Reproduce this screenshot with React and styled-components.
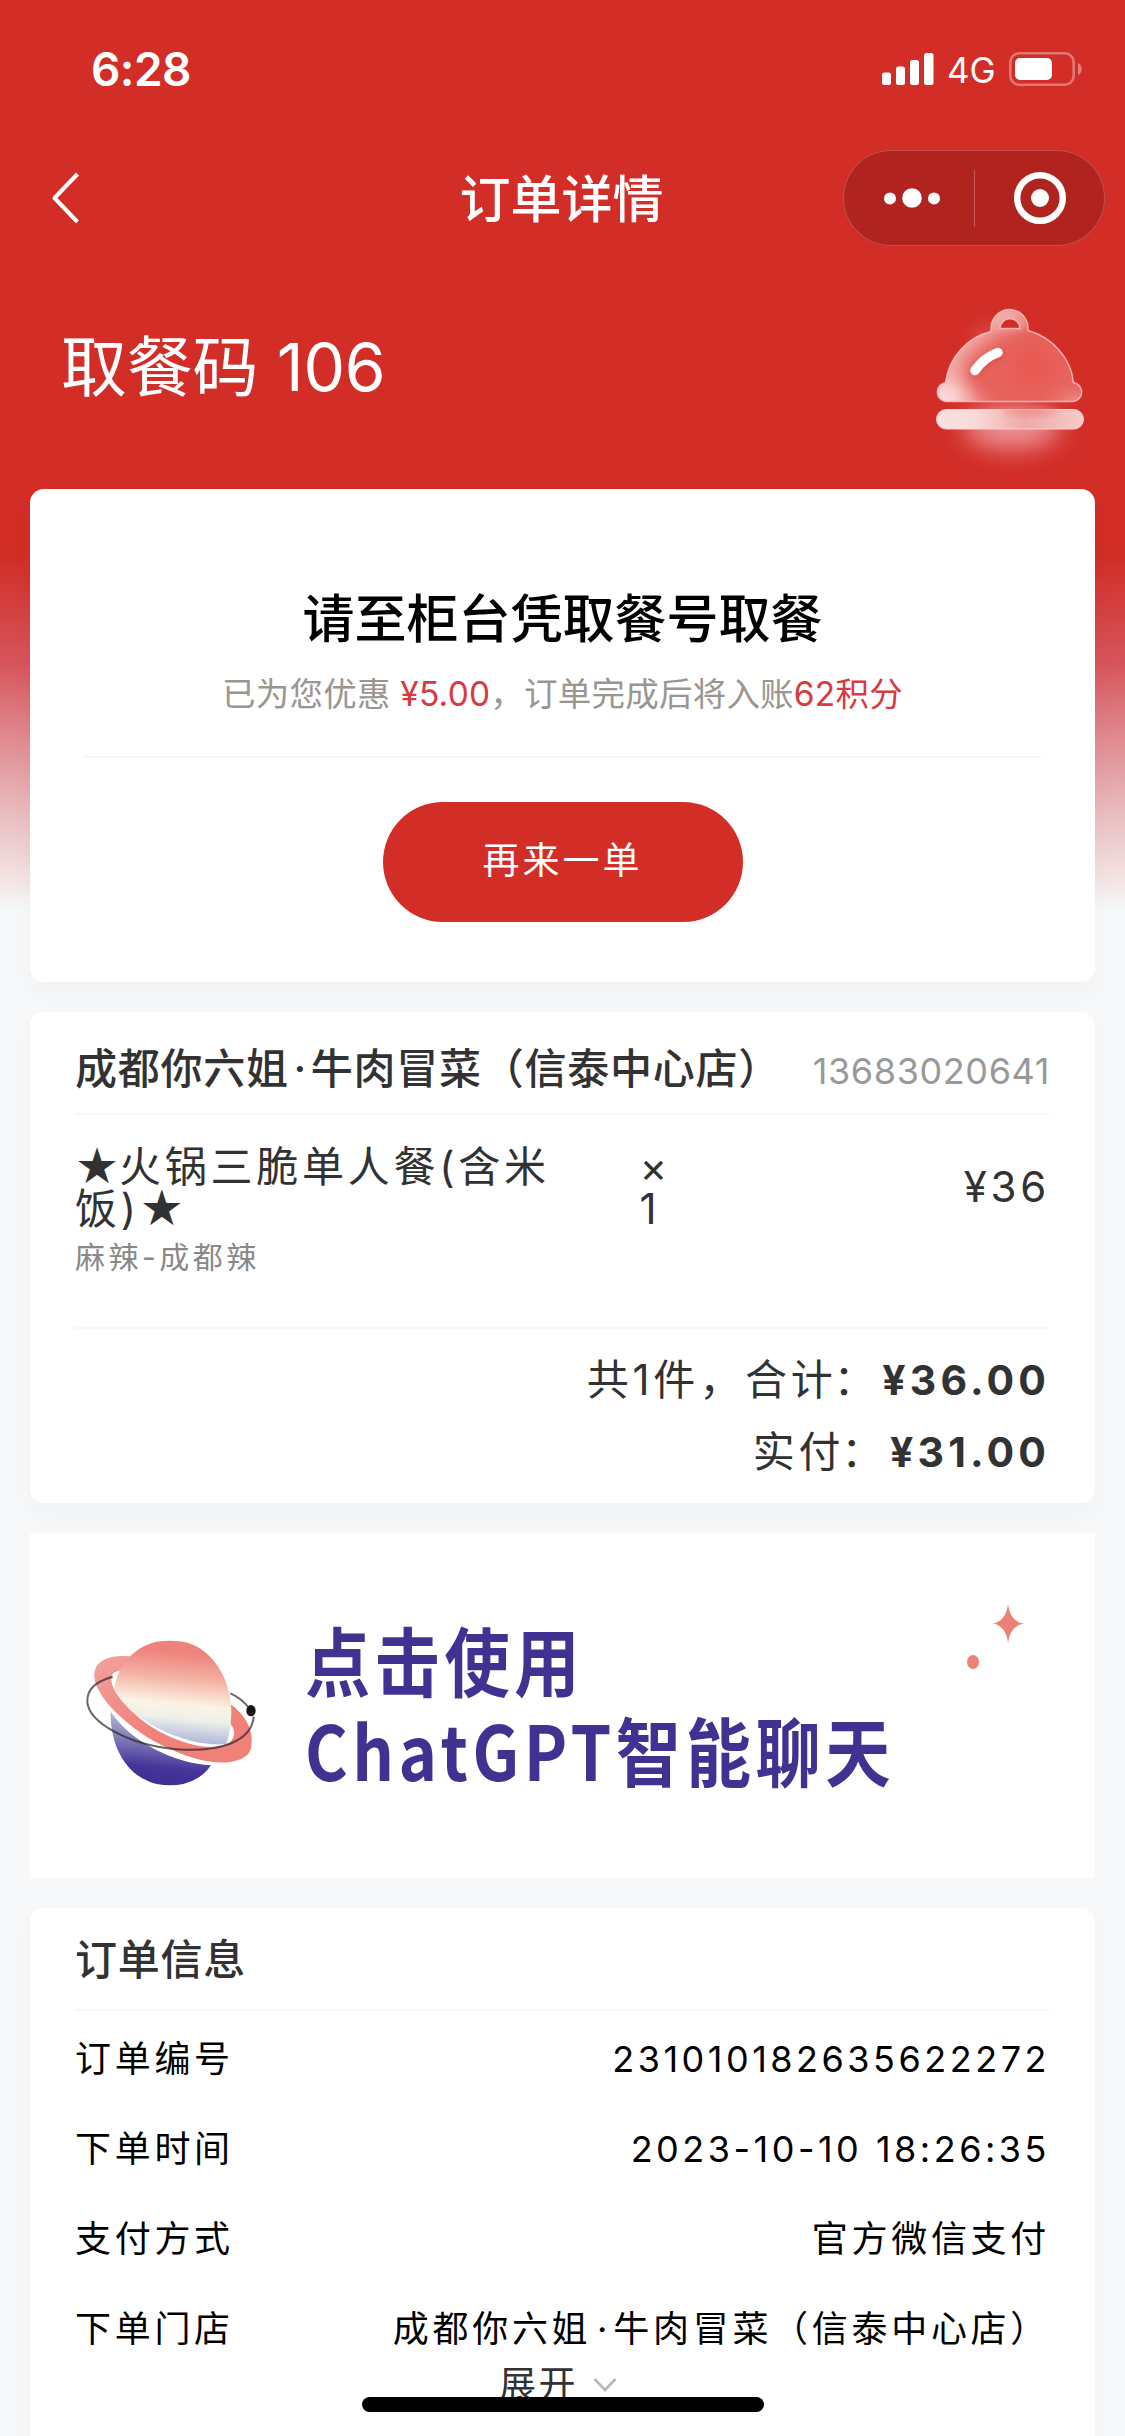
import React from "react";
import styled, { createGlobalStyle } from "styled-components";

const GlobalStyle = createGlobalStyle`
  *, *::before, *::after { box-sizing: border-box; }
  html, body { margin: 0; padding: 0; background: #f7f8fa; }
  body {
    font-family: Inter, "Noto Sans CJK SC", sans-serif;
    color: #323233;
    -webkit-font-smoothing: antialiased;
  }
`;

const Page = styled.div`
  position: relative;
  width: 1125px;
  height: 2436px;
  overflow: hidden;
  display: flex;
  flex-direction: column;
  background: linear-gradient(
    180deg,
    #d22d27 0,
    #d22d27 556px,
    #d6555b 663px,
    #df888e 735px,
    #eabdc0 815px,
    #f3e4e4 880px,
    #f7f8fa 910px
  );
`;

const StatusBar = styled.header`
  flex: none;
  display: flex;
  align-items: center;
  justify-content: space-between;
  height: 138px;
  padding: 0 43px 0 91px;
  color: #fff;
`;

const Clock = styled.span`
  font-size: 46px;
  line-height: 56px;
  font-weight: 600;
  letter-spacing: -0.6px;
`;

const StatusIcons = styled.div`
  display: flex;
  align-items: center;
`;

const Network = styled.span`
  width: 49px;
  margin: 2px 13px 0 13px;
  font-size: 35px;
  line-height: 40px;
`;

const NavBar = styled.nav`
  flex: none;
  display: grid;
  grid-template-columns: 1fr auto 1fr;
  align-items: center;
  height: 120px;
  padding: 0 20px;
  color: #fff;

  > svg { margin-left: 30px; }
`;

const NavTitle = styled.h1`
  margin: 3px 2px 0 0;
  font-size: 51px;
  line-height: 60px;
  font-weight: 500;
`;

const Capsule = styled.div`
  justify-self: end;
  display: flex;
  align-items: center;
  width: 262px;
  height: 96px;
  border: 1px solid rgba(255, 255, 255, 0.2);
  border-radius: 48px;
  background: #b1231f;
`;

const CapsuleButton = styled.button`
  flex: none;
  display: flex;
  align-items: center;
  justify-content: center;
  width: ${(p) => p.$width}px;
  height: 100%;
  padding: 0 0 0 ${(p) => p.$inset || 0}px;
  border: 0;
  background: none;
`;

const CapsuleDivider = styled.span`
  width: 1px;
  height: 57px;
  background: rgba(255, 255, 255, 0.25);
`;

const PickupBanner = styled.section`
  flex: none;
  display: flex;
  justify-content: space-between;
  height: 231px;
  padding: 37px 25px 0 61px;
  color: #fff;
`;

const PickupCode = styled.h2`
  margin: 24px 0 0;
  font-size: 66px;
  line-height: 96px;
  font-weight: 400;
  letter-spacing: -0.2px;
`;

const Card = styled.section`
  flex: none;
  height: ${(p) => p.$height}px;
  margin: 0 30px 30px;
  padding: ${(p) => p.$padding || "0 45px 0 45px"};
  border-radius: 14px;
  background: #fff;
  box-shadow: 0 12px 24px rgba(50, 50, 30, 0.03);
`;

const Rule = styled.div`
  height: 2px;
  background: #f6f7f8;
`;

const PickupHint = styled.h3`
  margin: 0;
  padding-top: 95px;
  font-size: 52px;
  line-height: 72px;
  font-weight: 500;
  text-align: center;
  color: #000;
`;

const Savings = styled.p`
  margin: 18px -10px 42px;
  font-size: 33.5px;
  line-height: 40px;
  letter-spacing: 0.22px;
  text-align: center;
  white-space: nowrap;
  color: #999691;
`;

const Highlight = styled.span`
  color: #d93a3f;
`;

const ReorderButton = styled.button`
  display: block;
  width: 360px;
  height: 120px;
  margin: 44px auto 0;
  padding: 0 0 2px 0;
  border: 0;
  border-radius: 60px;
  background: #d22d27;
  color: #fff;
  font: 400 37px/60px Inter, "Noto Sans CJK SC", sans-serif;
  letter-spacing: 3px;
`;

const CardHeader = styled.div`
  display: flex;
  align-items: center;
  justify-content: space-between;
  height: 101px;
  padding-top: ${(p) => p.$drop || 0}px;
`;

const CardTitle = styled.h3`
  margin: 0;
  font-size: 42px;
  line-height: 60px;
  font-weight: 500;
  letter-spacing: 0.75px;
  white-space: nowrap;
`;

const MidDot = styled.span`
  display: inline-block;
  width: 22px;
  letter-spacing: 0;
  text-align: center;
`;

const Phone = styled.span`
  margin-top: 4px;
  font-size: 36px;
  line-height: 44px;
  letter-spacing: 0.6px;
  color: #999;
`;

const Item = styled.div`
  display: grid;
  grid-template-columns: 564.5px 40px 1fr;
  height: 212px;
  padding-top: 31px;
  font-size: 42px;
  line-height: 42px;
  letter-spacing: 3.75px;
`;

const ItemName = styled.div`
  width: 490px;
`;

const Star = styled.span`
  display: inline-block;
  width: 44px;
  height: 42px;
  vertical-align: top;
  font-size: 35px;
  letter-spacing: 0;
  text-align: center;
  -webkit-text-stroke: 2.4px #323233;
`;

const ItemOption = styled.div`
  margin-top: 9px;
  font-size: 30px;
  line-height: 36px;
  letter-spacing: 3.5px;
  color: #888;
`;

const Quantity = styled.div`
  display: flex;
  flex-direction: column;
`;

const Price = styled.div`
  padding-top: 20px;
  text-align: right;
`;

const Total = styled.div`
  height: 72px;
  font-size: 42px;
  line-height: 72px;
  letter-spacing: 3.8px;
  text-align: right;
  white-space: nowrap;

  b { font-weight: 700; font-size: 41px; letter-spacing: 4.1px; }
`;

const Colon = styled.span`
  position: relative;
  left: -3px;
`;

const Totals = styled.div`
  padding-top: 15px;
`;

const Promo = styled.section`
  flex: none;
  position: relative;
  display: flex;
  align-items: flex-start;
  height: 345px;
  margin: 0 30px 30px;
  padding: 77px 0 0 30px;
  background: #fff;
`;

const PromoText = styled.div`
  margin: 4px 0 0 25px;
  font: 700 75px/90px "Noto Sans CJK SC", sans-serif;
  letter-spacing: 5.2px;
  white-space: nowrap;
  color: #433192;
  transform: scaleX(0.87);
  transform-origin: left top;
`;

const Sparkle = styled.svg`
  position: absolute;
  top: 65px;
  right: 68px;
`;

const InfoRow = styled.div`
  display: flex;
  align-items: center;
  justify-content: space-between;
  height: 90px;
  padding-top: 5px;
  font-size: 36px;
  line-height: 50px;
  letter-spacing: 3.7px;
  white-space: nowrap;
  color: #000;
`;

const Numeric = styled.span`
  letter-spacing: 3.5px;
`;

const ExpandButton = styled.button`
  display: flex;
  align-items: center;
  justify-content: center;
  gap: 15px;
  width: 100%;
  height: 50px;
  margin-top: -11px;
  padding: 0 9px 0 0;
  border: 0;
  background: none;
  color: #323233;
  font: 400 37px/50px Inter, "Noto Sans CJK SC", sans-serif;
  letter-spacing: 2.6px;
`;

const HomeIndicator = styled.div`
  position: absolute;
  left: 362px;
  bottom: 24px;
  width: 402px;
  height: 15px;
  border-radius: 8px;
  background: #000;
`;

const SignalIcon = () => (
  <svg width="52" height="34" viewBox="0 0 52 34" fill="#fff">
    <rect x="0" y="20.5" width="9" height="12.5" rx="2.5" />
    <rect x="14" y="14.5" width="9" height="18.5" rx="2.5" />
    <rect x="28" y="8" width="9" height="25" rx="2.5" />
    <rect x="42" y="1" width="9.5" height="32" rx="2.5" />
  </svg>
);

const BatteryIcon = () => (
  <svg width="73" height="34" viewBox="0 0 73 34">
    <rect x="1.3" y="1.3" width="63.4" height="31.4" rx="9" fill="none" stroke="#fff" strokeOpacity="0.36" strokeWidth="2.6" />
    <rect x="6" y="6" width="37" height="22" rx="5" fill="#fff" />
    <path d="M69 11c5 2 5 10 0 12z" fill="#fff" fillOpacity="0.4" />
  </svg>
);

const BackIcon = () => (
  <svg width="30" height="54" viewBox="0 0 30 54" fill="none" stroke="#fff" strokeWidth="4" strokeLinejoin="round">
    <path d="M27.500 3 4.500 27l23 24" />
  </svg>
);

const MoreIcon = () => (
  <svg width="58" height="20" viewBox="0 0 58 20" fill="#fff">
    <circle cx="7" cy="10.5" r="6" />
    <circle cx="29" cy="10" r="9.8" />
    <circle cx="51" cy="10.5" r="6" />
  </svg>
);

const TargetIcon = () => (
  <svg width="52" height="52" viewBox="0 0 52 52">
    <circle cx="26" cy="26" r="22.8" fill="none" stroke="#fff" strokeWidth="6.4" />
    <circle cx="26" cy="26" r="9" fill="#fff" />
  </svg>
);

const DOME =
  "M945.500 382.500C949 357 967 337.500 991 331.500V328a18.500 18.500 0 0 1 37 0v2.500C1052 337 1071 358 1073.500 382.500a9.600 9.600 0 0 1 0 19H945.500a9.600 9.600 0 0 1 0-19zM1000 328.500h20c-1-13-19-13-20 0z";

const BellIcon = () => (
  <svg width="180" height="190" viewBox="920 295 180 190">
    <defs>
      <clipPath id="domeClip"><path d={DOME} clipRule="evenodd" /></clipPath>
      <linearGradient id="plate" x1="936" y1="424" x2="1084" y2="414" gradientUnits="userSpaceOnUse">
        <stop offset="0" stopColor="#fae0e0" />
        <stop offset="0.27" stopColor="#f9dada" />
        <stop offset="0.6" stopColor="#f0a9a7" />
        <stop offset="1" stopColor="#f6cccb" />
      </linearGradient>
      <filter id="blurWide" x="-80%" y="-100%" width="260%" height="300%">
        <feGaussianBlur stdDeviation="13" />
      </filter>
      <filter id="blurSoft" x="-80%" y="-80%" width="260%" height="260%">
        <feGaussianBlur stdDeviation="9" />
      </filter>
      <filter id="blurFine" x="-50%" y="-80%" width="200%" height="260%">
        <feGaussianBlur stdDeviation="3" />
      </filter>
    </defs>
    <ellipse cx="1012" cy="427" rx="48" ry="22" fill="#f3a5aa" opacity="0.85" filter="url(#blurWide)" />
    <circle cx="985" cy="337" r="10" fill="#f0a5a2" opacity="0.4" filter="url(#blurSoft)" />
    <g clipPath="url(#domeClip)">
      <rect x="930" y="300" width="160" height="106" fill="#e8635e" />
      <circle cx="1033" cy="366" r="20" fill="#e8574d" opacity="0.8" filter="url(#blurSoft)" />
      <path d="M920 420V350L980 310 1020 290V322L990 336 962 362 964 384 990 412z" fill="#f6c6c5" opacity="0.75" filter="url(#blurSoft)" />
      <ellipse cx="942" cy="398" rx="22" ry="14" fill="#fdeaea" opacity="0.85" filter="url(#blurSoft)" />
      <ellipse cx="1080" cy="404" rx="26" ry="9" fill="#f4b5b3" opacity="0.6" filter="url(#blurSoft)" />
      <path d="M991 330v-4a18.500 18.500 0 0 1 37 0v4z" fill="#f3aeac" opacity="0.5" filter="url(#blurFine)" />
    </g>
    <path d={DOME} fill="none" stroke="#f7c0bf" strokeOpacity="0.85" strokeWidth="1.5" />
    <path d="M976 373q8-12 24-19" fill="none" stroke="#c83a36" strokeOpacity="0.4" strokeWidth="10" strokeLinecap="round" filter="url(#blurFine)" />
    <path d="M975 370.500q9-13 23-18" fill="none" stroke="#fff" strokeWidth="9.5" strokeLinecap="round" />
    <rect x="936.500" y="409.500" width="147" height="19.500" rx="9.700" fill="url(#plate)" stroke="#f8d0d0" strokeWidth="1" />
    <ellipse cx="1030" cy="412" rx="28" ry="3" fill="#e8716c" opacity="0.55" filter="url(#blurFine)" />
  </svg>
);

const PlanetIcon = () => (
  <svg width="220" height="200" viewBox="0 0 660 600">
    <defs>
      <linearGradient id="planetTop" x1="350" y1="95" x2="320" y2="405" gradientUnits="userSpaceOnUse">
        <stop offset="0.1" stopColor="#ee837c" />
        <stop offset="0.35" stopColor="#f3b3a5" />
        <stop offset="0.6" stopColor="#fbf3e4" />
        <stop offset="0.73" stopColor="#eef1ea" />
        <stop offset="1" stopColor="#a3acd5" />
      </linearGradient>
      <linearGradient id="planetBase" x1="300" y1="310" x2="280" y2="525" gradientUnits="userSpaceOnUse">
        <stop offset="0" stopColor="#b4bcde" />
        <stop offset="0.35" stopColor="#8883bd" />
        <stop offset="0.75" stopColor="#45359a" />
        <stop offset="1" stopColor="#402e90" />
      </linearGradient>
      <linearGradient id="ring" x1="110" y1="140" x2="260" y2="380" gradientUnits="userSpaceOnUse">
        <stop offset="0" stopColor="#f2a19c" />
        <stop offset="1" stopColor="#ef8179" />
      </linearGradient>
    </defs>
    <path d="M152 305C150 410 200 500 290 522Q330 530 370 522 425 508 453 466C350 460 215 400 152 305z" fill="url(#planetBase)" />
    <path
      d="M225 140C160 132 100 145 103 200 106 255 190 345 300 403 400 455 485 468 535 450 568 438 576 425 575 385 574 345 545 305 510 281V340Q535 370 510 397C470 425 380 408 300 366 215 320 130 225 160 190Q170 182 185 180z"
      fill="url(#ring)"
    />
    <path d="M163 235C168 185 210 112 290 95Q330 89 370 95C450 110 515 200 514 310Q512 370 498 402C440 408 370 392 300 358 225 320 180 275 163 235z" fill="url(#planetTop)" />
    <path d="M158 200C110 214 80 235 82 277 88 335 200 405 350 418 480 427 575 395 581 320M511 250Q545 265 567 294" fill="none" stroke="#262323" strokeOpacity="0.7" strokeWidth="6" />
    <ellipse cx="573" cy="302" rx="14" ry="17" fill="#171313" />
  </svg>
);

const ChevronDown = () => (
  <svg width="24" height="16" viewBox="0 0 24 16" fill="none" stroke="#b8b8b8" strokeWidth="2.6">
    <path d="M1.500 2 12 13 22.500 2" />
  </svg>
);

const StoreName = () => (
  <>
    成都你六姐<MidDot>·</MidDot>牛肉冒菜（信泰中心店）
  </>
);

export default function App() {
  return (
    <Page>
      <GlobalStyle />
      <StatusBar>
        <Clock>6:28</Clock>
        <StatusIcons>
          <SignalIcon />
          <Network>4G</Network>
          <BatteryIcon />
        </StatusIcons>
      </StatusBar>
      <NavBar>
        <BackIcon />
        <NavTitle>订单详情</NavTitle>
        <Capsule>
          <CapsuleButton $width={130} $inset={6}><MoreIcon /></CapsuleButton>
          <CapsuleDivider />
          <CapsuleButton $width={129} $inset={1}><TargetIcon /></CapsuleButton>
        </Capsule>
      </NavBar>
      <PickupBanner>
        <PickupCode>取餐码 106</PickupCode>
        <BellIcon />
      </PickupBanner>

      <Card $height={493} $padding="0 53px">
        <PickupHint>请至柜台凭取餐号取餐</PickupHint>
        <Savings>
          已为您优惠 <Highlight>¥5.00</Highlight>，订单完成后将入账<Highlight>62积分</Highlight>
        </Savings>
        <Rule />
        <ReorderButton>再来一单</ReorderButton>
      </Card>

      <Card $height={491}>
        <CardHeader $drop={12}>
          <CardTitle><StoreName /></CardTitle>
          <Phone>13683020641</Phone>
        </CardHeader>
        <Rule />
        <Item>
          <ItemName>
            <Star>★</Star>火锅三脆单人餐(含米饭)<Star>★</Star>
            <ItemOption>麻辣-成都辣</ItemOption>
          </ItemName>
          <Quantity>
            <span>×</span>
            <span>1</span>
          </Quantity>
          <Price>¥36</Price>
        </Item>
        <Rule />
        <Totals>
          <Total>共1件，合计<Colon>：</Colon><b>¥36.00</b></Total>
          <Total>实付<Colon>：</Colon><b>¥31.00</b></Total>
        </Totals>
      </Card>

      <Promo>
        <PlanetIcon />
        <PromoText>
          点击使用<br />ChatGPT智能聊天
        </PromoText>
        <Sparkle width="72" height="76" viewBox="0 0 72 76" fill="#ec8177">
          <path d="M53 6Q55 24 69 25.500 55 28 53 45 51 28 38 25.500 51 23 53 6z" />
          <ellipse cx="18" cy="64" rx="6" ry="7" />
        </Sparkle>
      </Promo>

      <Card $height={560}>
        <CardHeader $drop={2}>
          <CardTitle>订单信息</CardTitle>
        </CardHeader>
        <Rule />
        <InfoRow><span>订单编号</span><Numeric>231010182635622272</Numeric></InfoRow>
        <InfoRow><span>下单时间</span><Numeric>2023-10-10 18:26:35</Numeric></InfoRow>
        <InfoRow><span>支付方式</span><span>官方微信支付</span></InfoRow>
        <InfoRow><span>下单门店</span><span><StoreName /></span></InfoRow>
        <ExpandButton>展开 <ChevronDown /></ExpandButton>
      </Card>
      <HomeIndicator />
    </Page>
  );
}
